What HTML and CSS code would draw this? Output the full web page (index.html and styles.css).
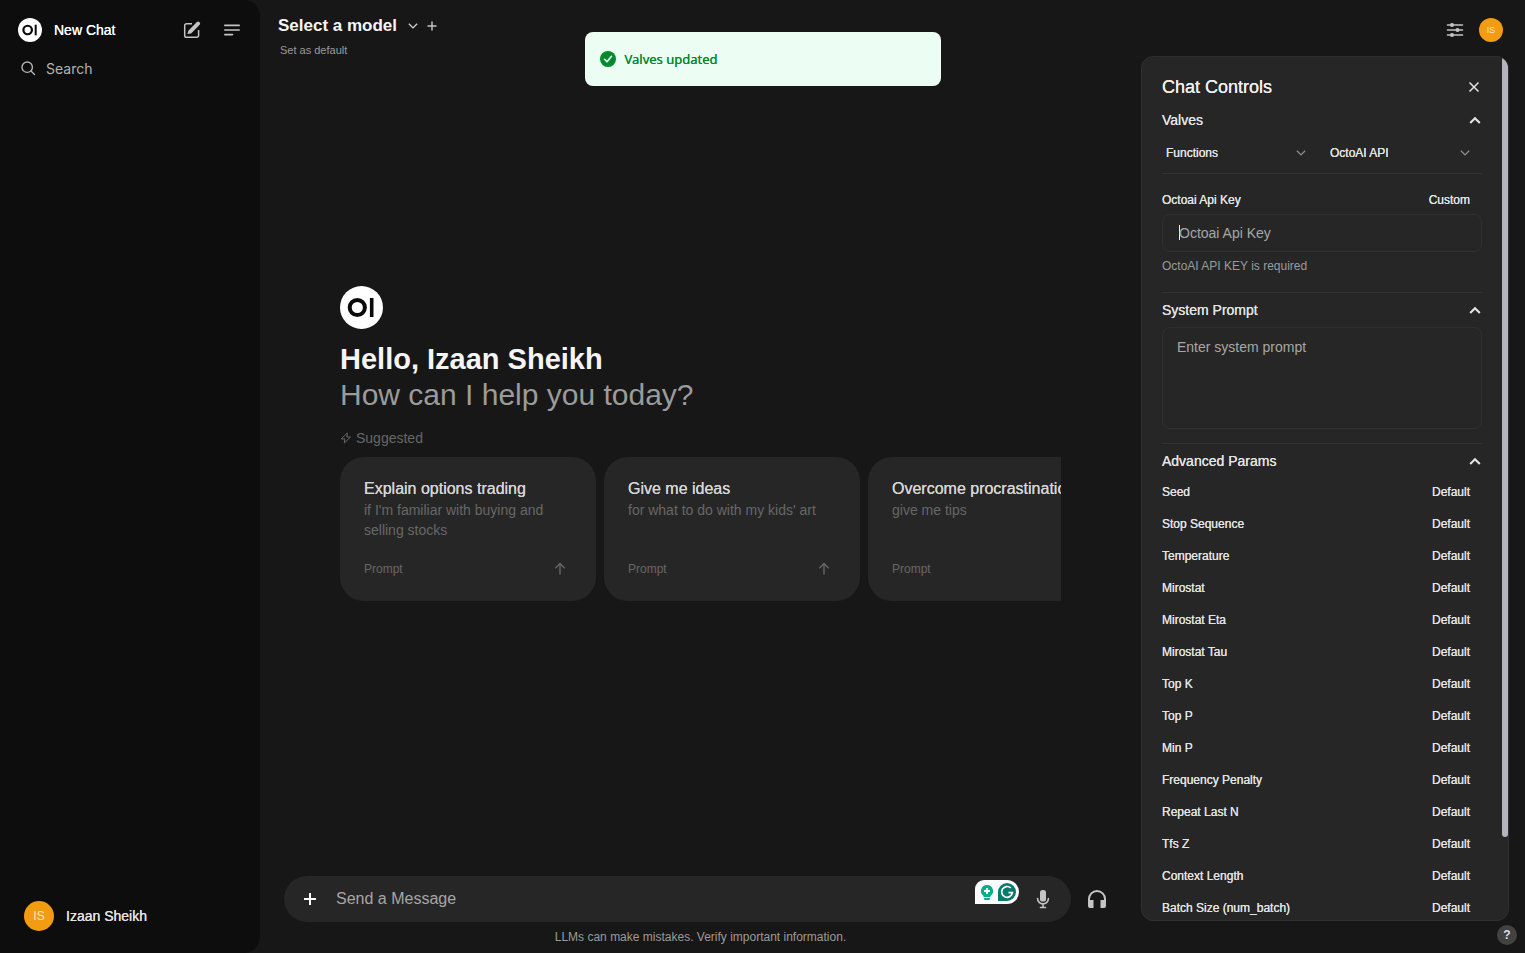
FILE: index.html
```html
<!DOCTYPE html>
<html lang="en">
<head>
<meta charset="utf-8">
<meta name="viewport" content="width=device-width, initial-scale=1">
<title>New Chat</title>
<link rel="stylesheet" href="styles.css">
</head>
<body>
<svg class="defs" aria-hidden="true">
  <symbol id="logo" viewBox="0 0 43 43"><circle cx="21.500" cy="21.500" r="21.500" fill="#fff"/><circle cx="17.300" cy="21.500" r="7.600" fill="none" stroke="#0a0a0a" stroke-width="4"/><path d="M31.700 12v19" stroke="#0a0a0a" stroke-width="3.600"/></symbol>
  <symbol id="up" viewBox="0 0 16 16"><path d="M2.500 11.500 8 6l5.500 5.500" fill="none" stroke="currentColor" stroke-width="2.400"/></symbol>
  <symbol id="down" viewBox="0 0 16 16"><path d="m2.500 5 5.500 5.500L13.500 5" fill="none" stroke="currentColor" stroke-width="1.800"/></symbol>
  <symbol id="arrow" viewBox="0 0 16 16"><path d="M8 13.500V2.500M3.300 7.200 8 2.500l4.700 4.700" fill="none" stroke="currentColor" stroke-width="1.400"/></symbol>
  <symbol id="plus" viewBox="0 0 16 16"><path d="M8 2v12M2 8h12" fill="none" stroke="currentColor" stroke-width="2"/></symbol>
</svg>

<aside class="sidebar">
  <nav class="sidebar-nav">
    <div class="sidebar-top">
      <a class="new-chat" href="#"><svg class="logo-small"><use href="#logo"/></svg><span>New Chat</span></a>
      <button class="icon-button" aria-label="Compose"><svg class="icon-20" viewBox="0 0 20 20" fill="currentColor"><path d="m5.400 13.900.9-3.200L14.900 2a2 2 0 0 1 2.800 2.800l-8.600 8.700z"/><path d="M10 3.700H4.500a1.800 1.800 0 0 0-1.800 1.800v10a1.800 1.800 0 0 0 1.800 1.800h10.300a1.800 1.800 0 0 0 1.800-1.800V10" fill="none" stroke="currentColor" stroke-width="1.500"/></svg></button>
      <button class="icon-button" aria-label="Toggle sidebar"><svg class="icon-20" viewBox="0 0 20 20" fill="none" stroke="currentColor" stroke-width="1.600" stroke-linecap="round"><path d="M2.800 5.400h14.400M2.800 10h14.400M2.800 14.600h7.700"/></svg></button>
    </div>
    <label class="search"><svg class="icon-16" viewBox="0 0 16 16" fill="none" stroke="currentColor" stroke-width="1.400" stroke-linecap="round"><circle cx="7.200" cy="7.200" r="5.200"/><path d="m11 11 3.500 3.500"/></svg><input type="text" placeholder="Search" aria-label="Search"></label>
  </nav>
  <button class="account"><span class="avatar avatar-large">IS</span><span>Izaan Sheikh</span></button>
</aside>

<main class="main">
  <header class="header">
    <div class="model">
      <div class="model-row"><button class="model-name">Select a model <svg class="icon-12 chevron"><use href="#down"/></svg></button><button class="add-model" aria-label="Add model"><svg class="icon-12"><use href="#plus"/></svg></button></div>
      <button class="set-default">Set as default</button>
    </div>
    <div class="header-actions">
      <button class="icon-button" aria-label="Controls"><svg class="icon-20" viewBox="0 0 20 20" fill="none" stroke="currentColor" stroke-width="1.500" stroke-linecap="round"><path d="M2.500 5H5M9 5h8.500M2.500 10h8M14.500 10h3M2.500 15H5M9 15h8.500"/><g fill="currentColor"><circle cx="7" cy="5" r="1.300"/><circle cx="12.500" cy="10" r="1.300"/><circle cx="7" cy="15" r="1.300"/></g></svg></button>
      <button class="avatar avatar-small">IS</button>
    </div>
  </header>

  <div class="workspace">
    <section class="chat">
      <div class="landing">
        <svg class="logo-large"><use href="#logo"/></svg>
        <h1 class="greeting">Hello, Izaan Sheikh</h1>
        <p class="question">How can I help you today?</p>
        <div class="suggested"><svg class="icon-12" viewBox="0 0 12 12" fill="none" stroke="currentColor" stroke-linejoin="round"><path d="M7.400 1 1.200 6.900h3.600L4.300 11l6.200-6H6.800z"/></svg>Suggested</div>
        <div class="cards">
          <button class="card"><span class="card-title">Explain options trading</span><span class="card-text">if I'm familiar with buying and selling stocks</span><span class="card-foot">Prompt <svg class="icon-16"><use href="#arrow"/></svg></span></button>
          <button class="card"><span class="card-title">Give me ideas</span><span class="card-text">for what to do with my kids' art</span><span class="card-foot">Prompt <svg class="icon-16"><use href="#arrow"/></svg></span></button>
          <button class="card"><span class="card-title">Overcome procrastination</span><span class="card-text">give me tips</span><span class="card-foot">Prompt <svg class="icon-16"><use href="#arrow"/></svg></span></button>
        </div>
      </div>
      <footer class="composer-area">
        <div class="composer-row">
          <form class="composer">
            <button type="button" class="attach" aria-label="More"><svg class="icon-16"><use href="#plus"/></svg></button>
            <input class="message" type="text" placeholder="Send a Message" aria-label="Send a Message">
            <svg class="assistant" viewBox="0 0 44 24"><path d="M0 24V9a9 9 0 0 1 9-9h23a12 12 0 0 1 0 24z" fill="#fff"/><path d="M12 5a6 6 0 0 0-3.500 10.900V17h7v-1.100A6 6 0 0 0 12 5M9 18h6v.7a1.300 1.300 0 0 1-1.300 1.300h-3.400A1.300 1.300 0 0 1 9 18.700z" fill="#0cab8a"/><path d="M12 8v6M9 11h6" stroke="#fff" stroke-width="1.800"/><path d="M23 21v-9a9 9 0 1 1 9 9z" fill="#087b6b"/><path d="M35.800 8A5.400 5.400 0 1 0 37.400 12.700H33.500" fill="none" stroke="#fff" stroke-width="1.700"/></svg>
            <button type="button" class="icon-button" aria-label="Dictate"><svg class="icon-20" viewBox="0 0 20 20" fill="currentColor"><rect x="7" y="1" width="6" height="11.500" rx="2.600"/><path d="M4.600 9.500a5.400 5.400 0 0 0 10.800 0M10 15v3.500M7.500 18.500h5" fill="none" stroke="currentColor" stroke-width="1.600" stroke-linecap="round"/></svg></button>
          </form>
          <button class="icon-button" aria-label="Call"><svg class="icon-20" viewBox="0 0 20 20" fill="currentColor"><path d="M1 10a9 9 0 0 1 18 0v7a2 2 0 0 1-2 2h-3.500v-8h3.500v-1a7 7 0 0 0-14 0v1h3.500v8H3a2 2 0 0 1-2-2z"/></svg></button>
        </div>
        <p class="disclaimer">LLMs can make mistakes. Verify important information.</p>
      </footer>
    </section>

    <aside class="panel">
      <div class="panel-head"><h2 class="panel-title">Chat Controls</h2><button class="close" aria-label="Close"><svg class="icon-12" viewBox="0 0 12 12"><path d="m1.500 1.500 9 9m0-9-9 9" fill="none" stroke="currentColor" stroke-width="1.500"/></svg></button></div>
      <button class="section-head valves-head">Valves <svg class="icon-14"><use href="#up"/></svg></button>
      <div class="selects">
        <div class="select"><select aria-label="Valve type"><option>Functions</option></select><svg class="icon-12"><use href="#down"/></svg></div>
        <div class="select"><select aria-label="Function"><option>OctoAI API</option></select><svg class="icon-12"><use href="#down"/></svg></div>
      </div>
      <div class="field">
        <div class="field-head"><label for="api-key">Octoai Api Key</label><button>Custom</button></div>
        <div class="key-box"><span class="caret"></span><input id="api-key" type="text" placeholder="Octoai Api Key"></div>
        <p class="hint">OctoAI API KEY is required</p>
      </div>
      <div class="system">
        <button class="section-head">System Prompt <svg class="icon-14"><use href="#up"/></svg></button>
        <textarea class="prompt" placeholder="Enter system prompt" aria-label="System Prompt"></textarea>
      </div>
      <div class="advanced">
        <button class="section-head">Advanced Params <svg class="icon-14"><use href="#up"/></svg></button>
        <div class="params">
          <div class="param"><span>Seed</span><button>Default</button></div>
          <div class="param"><span>Stop Sequence</span><button>Default</button></div>
          <div class="param"><span>Temperature</span><button>Default</button></div>
          <div class="param"><span>Mirostat</span><button>Default</button></div>
          <div class="param"><span>Mirostat Eta</span><button>Default</button></div>
          <div class="param"><span>Mirostat Tau</span><button>Default</button></div>
          <div class="param"><span>Top K</span><button>Default</button></div>
          <div class="param"><span>Top P</span><button>Default</button></div>
          <div class="param"><span>Min P</span><button>Default</button></div>
          <div class="param"><span>Frequency Penalty</span><button>Default</button></div>
          <div class="param"><span>Repeat Last N</span><button>Default</button></div>
          <div class="param"><span>Tfs Z</span><button>Default</button></div>
          <div class="param"><span>Context Length</span><button>Default</button></div>
          <div class="param"><span>Batch Size (num_batch)</span><button>Default</button></div>
        </div>
      </div>
      <div class="scroll-thumb"></div>
    </aside>
  </div>
</main>

<div class="toast" role="status"><svg class="icon-20" viewBox="0 0 20 20"><circle cx="10" cy="10" r="8" fill="#008a2e"/><path d="m6.500 10.300 2.500 2.500 4.500-5.500" fill="none" stroke="#ecfdf3" stroke-width="1.600" stroke-linecap="round" stroke-linejoin="round"/></svg>Valves updated</div>
<button class="help" aria-label="Help">?</button>
</body>
</html>
```
FILE: styles.css
```css
* { box-sizing: border-box; }

body {
  margin: 0;
  height: 100vh;
  display: flex;
  overflow: hidden;
  background: #171717;
  color: #e3e3e3;
  font-family: "Liberation Sans", Arial, sans-serif;
  font-size: 14px;
}

button, input, select, textarea {
  margin: 0;
  padding: 0;
  border: 0;
  outline: 0;
  background: none;
  color: inherit;
  font: inherit;
  text-align: left;
  text-shadow: inherit;
}

a { color: inherit; text-decoration: none; }
h1, h2, p { margin: 0; font-weight: 400; }
svg { display: block; flex: none; }
input::placeholder, textarea::placeholder { color: #a6a6a6; opacity: 1; }

.defs { position: absolute; width: 0; height: 0; }
.icon-12 { width: 12px; height: 12px; }
.icon-14 { width: 14px; height: 14px; }
.icon-16 { width: 16px; height: 16px; }
.icon-20 { width: 20px; height: 20px; }
.icon-button { color: #c4c4c4; }

.avatar {
  display: flex;
  align-items: center;
  justify-content: center;
  border-radius: 50%;
  background: #f39c12;
  color: #f8e6c4;
}
.avatar-large { width: 30px; height: 30px; font-size: 12px; text-shadow: none; }
.avatar-small { width: 24px; height: 24px; font-size: 9px; }

.sidebar {
  flex: none;
  width: 260px;
  display: flex;
  flex-direction: column;
  justify-content: space-between;
  padding: 18px 18px 22px;
  border-radius: 0 16px 16px 0;
  background: #0d0d0d;
}
.sidebar-top { display: flex; align-items: center; gap: 20px; }
.new-chat {
  flex: 1;
  display: flex;
  align-items: center;
  gap: 12px;
  color: #fff;
  line-height: 22px;
  text-shadow: 0 0 currentColor;
}
.logo-small { width: 24px; height: 24px; }
.search { display: flex; align-items: center; gap: 10px; padding: 16px 2px 0; color: #b4b4b4; }
.search input { flex: 1; min-width: 0; height: 20px; font-family: Inter, sans-serif; }
.search input::placeholder { color: #b4b4b4; }
.account {
  display: flex;
  align-items: center;
  gap: 12px;
  padding-left: 6px;
  text-shadow: 0 0 currentColor;
}

.main { flex: 1; min-width: 0; display: flex; flex-direction: column; }
.header { flex: none; height: 56px; display: flex; justify-content: space-between; padding: 12px 22px 0 18px; }
.model-row { display: flex; align-items: center; gap: 7px; height: 28px; color: #c4c4c4; }
.model-name { display: flex; align-items: center; gap: 10px; color: #f5f5f5; font-size: 17px; font-weight: 700; }
.chevron { color: #d0d0d0; }
.set-default { display: block; padding: 4px 2px 0; color: #9b9b9b; font-size: 11px; }
.header-actions { display: flex; align-items: center; gap: 14px; height: 36px; }

.workspace { flex: 1; min-height: 0; display: flex; }
.chat { flex: 1; min-width: 0; display: flex; flex-direction: column; }
.landing {
  flex: 1;
  display: flex;
  flex-direction: column;
  justify-content: center;
  padding: 0 80px 45px;
}
.logo-large { width: 43px; height: 43px; margin-bottom: 12px; }
.greeting { color: #f5f5f5; font-size: 29px; line-height: 36px; font-weight: 700; }
.question { color: #9b9b9b; font-size: 30px; line-height: 36px; }
.suggested { display: flex; align-items: center; gap: 4px; margin: 15px 0 9px; color: #676767; line-height: 20px; }
.cards { display: flex; gap: 8px; overflow: hidden; }
.card {
  flex: none;
  width: 256px;
  height: 144px;
  display: flex;
  flex-direction: column;
  padding: 20px 24px 22px;
  border-radius: 24px;
  background: #262626;
  color: #676767;
}
.card-title { color: #d6d6d6; font-size: 16px; line-height: 23px; white-space: nowrap; text-shadow: 0 0 currentColor; }
.card-text { flex: 1; line-height: 20px; }
.card-foot { display: flex; align-items: center; justify-content: space-between; padding-right: 4px; font-size: 12px; line-height: 20px; }

.composer-row { display: flex; align-items: center; gap: 16px; padding: 0 34px 0 24px; }
.composer {
  flex: 1;
  height: 46px;
  display: flex;
  align-items: center;
  padding: 0 18px;
  border-radius: 23px;
  background: #262626;
}
.attach { color: #fff; }
.message { flex: 1; min-width: 0; margin-left: 18px; font-size: 16px; }
.assistant { width: 44px; height: 24px; margin: 0 14px 14px 0; }
.disclaimer { padding: 6px 0 7px; color: #9b9b9b; font-size: 12px; line-height: 18px; text-align: center; }

.panel {
  position: relative;
  flex: none;
  width: 368px;
  margin: 0 16px 32px 0;
  padding: 16px 26px 0 20px;
  overflow: hidden;
  border: 1px solid #303030;
  border-radius: 12px;
  background: #262626;
}
.panel-head { display: flex; align-items: center; justify-content: space-between; height: 28px; padding-right: 2px; }
.panel-title { color: #f0f0f0; font-size: 18px; text-shadow: 0 0 currentColor; }
.section-head {
  width: 100%;
  height: 20px;
  display: flex;
  align-items: center;
  justify-content: space-between;
  text-shadow: 0 0 currentColor;
}
.valves-head { margin-top: 9px; }
.selects { display: flex; gap: 8px; margin-top: 11px; padding-bottom: 8px; border-bottom: 1px solid #333; font-size: 12px; }
.select { flex: 1; display: flex; align-items: center; padding: 0 11px 0 4px; color: #8a8a8a; }
.select select { flex: 1; height: 24px; appearance: none; color: #e3e3e3; text-shadow: 0 0 currentColor; }
.field { padding: 16px 0 18px; border-bottom: 1px solid #333; }
.field-head, .param {
  display: flex;
  align-items: center;
  justify-content: space-between;
  padding-right: 12px;
  font-size: 12px;
  text-shadow: 0 0 currentColor;
}
.field-head { height: 20px; }
.key-box { display: flex; align-items: center; height: 38px; margin-top: 4px; padding: 0 16px 1px; border: 1px solid #303030; border-radius: 8px; }
.key-box input { flex: 1; min-width: 0; }
.caret { width: 1px; height: 15px; margin-right: -1px; background: #ececec; }
.hint { margin-top: 6px; color: #9b9b9b; font-size: 12px; line-height: 16px; }
.system { padding: 7px 0 14px; border-bottom: 1px solid #333; }
.prompt { display: block; width: 100%; height: 102px; margin-top: 7px; padding: 9px 14px; border: 1px solid #303030; border-radius: 8px; line-height: 20px; resize: none; }
.advanced { padding-top: 7px; }
.params { margin-top: 5px; }
.param { height: 32px; }
.scroll-thumb { position: absolute; top: 0; right: 0; bottom: 83px; width: 6px; border-radius: 3px; background: #b4b4bf; }

.toast {
  position: fixed;
  top: 32px;
  left: calc(50% - 178px);
  width: 356px;
  height: 54px;
  display: flex;
  align-items: center;
  gap: 7px;
  padding: 0 13px;
  border-radius: 8px;
  background: #ecfdf3;
  color: #008a2e;
  font-family: "Noto Sans", sans-serif;
  font-size: 13px;
  text-shadow: 0 0 currentColor;
}
.help {
  position: fixed;
  right: 8px;
  bottom: 8px;
  width: 20px;
  height: 20px;
  border-radius: 50%;
  background: #424242;
  color: #dedede;
  font-size: 12px;
  font-weight: 700;
  text-align: center;
}
```
